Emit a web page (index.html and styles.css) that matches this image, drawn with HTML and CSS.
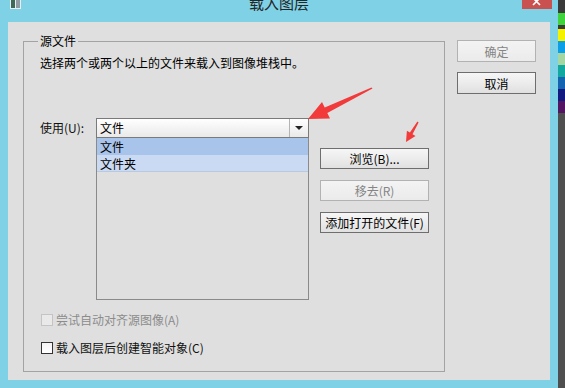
FILE: index.html
```html
<!DOCTYPE html>
<html lang="zh-CN">
<head>
    <meta charset="UTF-8">
    <title>载入图层</title>
    <link rel="stylesheet" href="styles.css">
</head>
<body>
    <div class="screen">
        <div class="window">
            <div class="titlebar">
                <svg class="app-icon" width="11" height="9" viewBox="0 0 11 9">
                    <rect x="0" y="0" width="11" height="9" fill="#e8eef0"/>
                    <rect x="1" y="0" width="4" height="8" fill="#3c6a55"/>
                    <rect x="6" y="0" width="4" height="8" fill="#8f9ba0"/>
                </svg>
                <div class="title">载入图层</div>
                <div class="close-btn">
                    <svg width="30" height="9" viewBox="0 0 30 9">
                        <path d="M11 -2 L18 5 M18 -2 L11 5" stroke="#fff" stroke-width="1.6"/>
                    </svg>
                </div>
            </div>
            <div class="client">
                <fieldset class="group">
                    <legend>源文件</legend>
                    <p class="desc">选择两个或两个以上的文件来载入到图像堆栈中。</p>
                    <div class="use-row">
                        <label class="use-label">使用(U):</label>
                        <div class="file-col">
                            <div class="combo">
                                <span class="combo-value">文件</span>
                                <span class="combo-arrow"></span>
                            </div>
                            <div class="file-list">
                                <div class="item selected">文件</div>
                                <div class="item hovered">文件夹</div>
                            </div>
                        </div>
                        <div class="side-buttons">
                            <button class="btn">浏览(B)...</button>
                            <button class="btn" disabled>移去(R)</button>
                            <button class="btn">添加打开的文件(F)</button>
                        </div>
                    </div>
                    <div class="check disabled"><span class="box"></span>尝试自动对齐源图像(A)</div>
                    <div class="check"><span class="box"></span>载入图层后创建智能对象(C)</div>
                </fieldset>
                <div class="dialog-buttons">
                    <button class="btn" disabled>确定</button>
                    <button class="btn">取消</button>
                </div>
            </div>
        </div>

        <div class="swatches">
            <span class="sw-top"></span>
            <span style="background:#3fd33c"></span>
            <span class="sw-gap"></span>
            <span style="background:#f4f200"></span>
            <span style="background:#0c9ee6"></span>
            <span style="background:#a6d7a3"></span>
            <span style="background:#12a89f"></span>
            <span style="background:#1464b2"></span>
            <span style="background:#121a80"></span>
            <span style="background:#531562"></span>
        </div>

        <svg class="arrows" width="565" height="388" viewBox="0 0 565 388">
            <polygon fill="#f23a3a" points="308,119 330,118.5 327.3,113 372.5,88.6 371.5,87.4 324.7,107.6 322,102"/>
            <polygon fill="#f23a3a" points="406,142 415.5,136 412.5,134.2 418.6,122.4 417.4,121.6 409.9,132.6 406.9,130.8"/>
        </svg>
    </div>
</body>
</html>
```

FILE: styles.css
```css
* {
    box-sizing: border-box;
}

body {
    margin: 0;
    font-family: "Noto Sans CJK SC", sans-serif;
    font-size: 12px;
    color: #000;
}

.screen {
    position: relative;
    width: 565px;
    height: 388px;
    display: flex;
    background: #7fd2e6;
    overflow: hidden;
}

.window {
    width: 558px;
    display: flex;
    flex-direction: column;
}

/* title bar */
.titlebar {
    height: 22px;
    display: grid;
    grid-template-columns: 1fr auto 1fr;
    align-items: start;
}

.app-icon {
    margin-left: 10px;
    display: block;
}

.title {
    font-size: 15px;
    line-height: 20px;
    margin-top: -7px;
    color: #262626;
}

.close-btn {
    justify-self: end;
    width: 30px;
    height: 9px;
    margin-right: 6px;
    background: #c9514f;
}

.close-btn svg {
    display: block;
}

/* dialog body */
.client {
    width: 542px;
    height: 358px;
    margin-left: 8px;
    padding: 11px 0 0 15px;
    background: #dfdfdf;
    display: flex;
    align-items: flex-start;
}

.group {
    width: 422px;
    margin: 0;
    padding: 0 0 15px 16px;
    border: 1px solid #a3a3a3;
    min-width: 0;
}

.group legend {
    margin-left: -2px;
    padding: 0 2px;
    line-height: 16px;
}

.desc {
    margin: 6px 0 0;
    line-height: 16px;
}

.use-row {
    display: flex;
    align-items: flex-start;
    margin-top: 47px;
}

.use-label {
    width: 56px;
    line-height: 20px;
    color: #111;
}

.file-col {
    width: 213px;
}

.combo {
    height: 20px;
    display: flex;
    border: 1px solid #7a7a7a;
    background: linear-gradient(#ffffff, #f4f4f4 50%, #e9e9e9);
}

.combo-value {
    flex: 1;
    padding-left: 3px;
    line-height: 18px;
}

.combo-arrow {
    width: 19px;
    border-left: 1px solid #b4b4b4;
    display: flex;
    align-items: center;
    justify-content: center;
}

.combo-arrow::after {
    content: "";
    border-left: 4px solid transparent;
    border-right: 4px solid transparent;
    border-top: 4px solid #222;
}

.file-list {
    height: 162px;
    border: 1px solid #8a8a8a;
    border-top: none;
    background: #dfdfdf;
}

.item {
    height: 17px;
    line-height: 17px;
    padding-left: 3px;
}

.item.selected {
    background: #a8c4ea;
}

.item.hovered {
    background: #c9daf2;
    border-bottom: 1px solid #b9c9e0;
}

.side-buttons {
    width: 109px;
    margin: 30px 0 0 11px;
    display: flex;
    flex-direction: column;
    gap: 11px;
}

.btn {
    height: 21px;
    padding: 0;
    font-family: inherit;
    font-size: 12px;
    color: #000;
    border: 1px solid #6e6e6e;
    background: linear-gradient(#f6f6f6, #ececec 50%, #e0e0e0);
}

.btn:disabled {
    color: #858585;
    border-color: #b2b2b2;
    background: linear-gradient(#f3f3f3, #ebebeb);
}

.check {
    display: flex;
    align-items: center;
    line-height: 16px;
    margin-top: 12px;
    color: #111;
}

.check .box {
    width: 12px;
    height: 12px;
    margin: 0 3px 0 1px;
    border: 1px solid #333;
    background: linear-gradient(#f4f4f4, #ffffff);
}

.check.disabled {
    color: #8c8c8c;
}

.check.disabled .box {
    border-color: #c4c4c4;
    background: #e9e9e9;
}

.dialog-buttons {
    width: 79px;
    margin: 7px 0 0 12px;
    display: flex;
    flex-direction: column;
    gap: 10px;
}

.dialog-buttons .btn {
    height: 22px;
}

/* palette strip on the right */
.swatches {
    width: 7px;
    margin-left: auto;
    display: flex;
    flex-direction: column;
    background: #4f4f4f;
}

.swatches span {
    height: 12px;
}

.swatches .sw-top {
    height: 13px;
    background: #3a3a3a;
}

.swatches .sw-gap {
    height: 4px;
    background: #3a3a3a;
}

.arrows {
    position: absolute;
    left: 0;
    top: 0;
    pointer-events: none;
}
```
